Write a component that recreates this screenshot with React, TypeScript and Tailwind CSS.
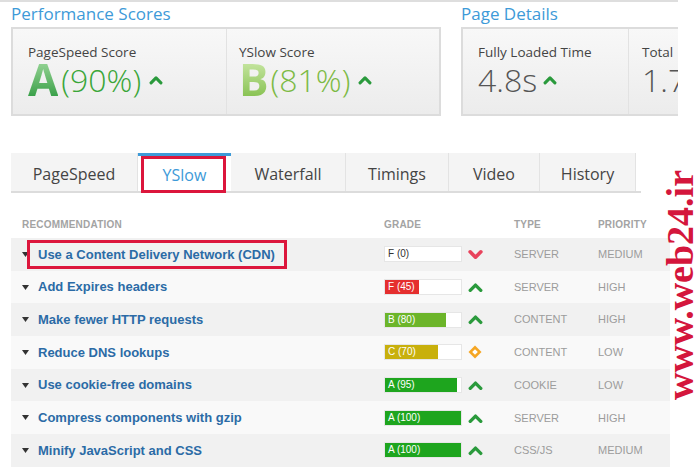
import React from "react";

type Row = {
  name: string;
  grade: string;
  pct: number;
  color: string;
  icon: "up" | "down" | "diamond";
  type: string;
  pri: string;
  hl?: boolean;
};

const rows: Row[] = [
  { name: "Use a Content Delivery Network (CDN)", grade: "F (0)", pct: 0, color: "#ffffff", icon: "down", type: "SERVER", pri: "MEDIUM", hl: true },
  { name: "Add Expires headers", grade: "F (45)", pct: 45, color: "#e52f2f", icon: "up", type: "SERVER", pri: "HIGH" },
  { name: "Make fewer HTTP requests", grade: "B (80)", pct: 80, color: "#6cb52a", icon: "up", type: "CONTENT", pri: "HIGH" },
  { name: "Reduce DNS lookups", grade: "C (70)", pct: 70, color: "#c8b00c", icon: "diamond", type: "CONTENT", pri: "LOW" },
  { name: "Use cookie-free domains", grade: "A (95)", pct: 95, color: "#1ea51e", icon: "up", type: "COOKIE", pri: "LOW" },
  { name: "Compress components with gzip", grade: "A (100)", pct: 100, color: "#1ea51e", icon: "up", type: "SERVER", pri: "HIGH" },
  { name: "Minify JavaScript and CSS", grade: "A (100)", pct: 100, color: "#1ea51e", icon: "up", type: "CSS/JS", pri: "MEDIUM" },
];

function Caret({ color = "#2a9a3c", size = 14 }: { color?: string; size?: number }) {
  return (
    <svg width={size} height={size * 0.7} viewBox="0 0 14 10">
      <path d="M2 8 L7 3 L12 8" fill="none" stroke={color} strokeWidth="3.2" strokeLinecap="round" strokeLinejoin="round" />
    </svg>
  );
}

function CaretDown() {
  return (
    <svg width="15" height="11" viewBox="0 0 14 10">
      <path d="M2 2.5 L7 7.5 L12 2.5" fill="none" stroke="#e8435c" strokeWidth="3.4" strokeLinecap="round" strokeLinejoin="round" />
    </svg>
  );
}

function Diamond() {
  return (
    <svg width="14" height="14" viewBox="0 0 14 14">
      <path d="M7 0.5 L13.5 7 L7 13.5 L0.5 7 Z" fill="#f5a623" />
      <rect x="5" y="5" width="4" height="4" transform="rotate(45 7 7)" fill="#ffffff" />
    </svg>
  );
}

const tabs = ["PageSpeed", "YSlow", "Waterfall", "Timings", "Video", "History"];
const tabWidths = ["w-[127px]", "w-[93px]", "w-[115px]", "w-[103px]", "w-[91px]", "w-[96px]"];

export default function App() {
  return (
    <div className="relative w-[700px] h-[470px] bg-white overflow-hidden" style={{ fontFamily: "'Open Sans', sans-serif" }}>
      {/* top summary */}
      <div className="w-[678px] overflow-hidden border-t-2 border-[#dedede]">
        <div className="flex pl-[11px] gap-[20px]">
          <div className="w-[430px] shrink-0">
            <div className="h-[25px] text-[17px] leading-[23px] text-[#3d9ad8]">Performance Scores</div>
            <div className="h-[89px] border-2 border-[#dcdcdc] bg-gradient-to-b from-[#f8f8f8] to-[#ececec] flex">
              <div className="w-[214px] border-r border-[#e2e2e2] pl-[15px] pt-[14px]">
                <div className="text-[13.5px] leading-[18px] text-[#444]">PageSpeed Score</div>
                <div className="flex items-end h-[36px] mt-[2px]">
                  <span className="text-[44px] leading-[40px] font-bold bg-gradient-to-b from-[#9bd89b] to-[#2f9c43] bg-clip-text text-transparent">A</span>
                  <span className="ml-[3px] text-[32px] leading-[38px] font-light text-[#3aa638]">(90%)</span>
                  <span className="ml-[8px] mb-[14px]"><Caret /></span>
                </div>
              </div>
              <div className="flex-1 pl-[12px] pt-[14px]">
                <div className="text-[13.5px] leading-[18px] text-[#444]">YSlow Score</div>
                <div className="flex items-end h-[36px] mt-[2px]">
                  <span className="text-[44px] leading-[40px] font-bold bg-gradient-to-b from-[#cbe8a6] to-[#84c04c] bg-clip-text text-transparent">B</span>
                  <span className="ml-[2px] text-[32px] leading-[38px] font-light text-[#7cba44]">(81%)</span>
                  <span className="ml-[8px] mb-[14px]"><Caret /></span>
                </div>
              </div>
            </div>
          </div>
          <div className="w-[300px] shrink-0">
            <div className="h-[25px] text-[17px] leading-[23px] text-[#3d9ad8]">Page Details</div>
            <div className="h-[89px] w-[260px] border-2 border-[#dcdcdc] bg-gradient-to-b from-[#f8f8f8] to-[#ececec] flex">
              <div className="w-[166px] border-r border-[#e2e2e2] pl-[15px] pt-[14px]">
                <div className="text-[13.5px] leading-[18px] text-[#444]">Fully Loaded Time</div>
                <div className="flex items-end h-[36px] mt-[2px]">
                  <span className="text-[32px] leading-[38px] font-light text-[#555]">4.8s</span>
                  <span className="ml-[6px] mb-[14px]"><Caret /></span>
                </div>
              </div>
              <div className="flex-1 pl-[13px] pt-[14px]">
                <div className="text-[13.5px] leading-[18px] text-[#444]">Total</div>
                <div className="flex items-end h-[36px] mt-[2px]">
                  <span className="text-[32px] leading-[38px] font-light text-[#555]">1.7</span>
                </div>
              </div>
            </div>
          </div>
        </div>
      </div>

      {/* tabs */}
      <div className="mt-[37px] ml-[11px] w-[630px] flex border-b-2 border-[#dcdcdc] h-[40px]">
        {tabs.map((t, i) => {
          const active = t === "YSlow";
          return (
            <div
              key={t}
              className={`${tabWidths[i]} relative flex items-center justify-center text-[16px] pt-[3px] ${
                active ? "bg-white text-[#3d9ad8] border-t-[3px] border-[#3d9ad8]" : "bg-[#f4f4f4] text-[#444] border-r border-[#e3e3e3]"
              }`}
            >
              {t}
              {active && <div className="absolute left-[3px] right-[5px] top-0 bottom-[-2px] border-[3px] border-[#dc163c]" />}
            </div>
          );
        })}
      </div>

      {/* table */}
      <div className="ml-[11px] w-[659px] mt-[23px]" style={{ fontFamily: "'Liberation Sans', Arial, sans-serif" }}>
        <div className="flex items-start h-[22px] pt-[3px] leading-[12px] text-[10px] font-bold text-[#a3a3a3] tracking-[0.2px]">
          <div className="w-[373px] pl-[11px]">RECOMMENDATION</div>
          <div className="w-[130px]">GRADE</div>
          <div className="w-[84px]">TYPE</div>
          <div>PRIORITY</div>
        </div>
        {rows.map((r, i) => (
          <div key={r.name} className={`flex items-center h-[32.7px] ${i % 2 === 0 ? "bg-[#f1f1f1]" : "bg-[#f9f9f9]"}`}>
            <div className="w-[373px] h-full pl-[11px] flex items-center relative">
              <svg width="7" height="5" viewBox="0 0 7 5" className="mr-[9px]">
                <path d="M0 0 L7 0 L3.5 5 Z" fill="#333" />
              </svg>
              <span className="text-[13px] font-bold text-[#2b6ba6]">{r.name}</span>
              {r.hl && <div className="absolute left-[16px] w-[260px] top-[2px] h-[29px] border-[3px] border-[#dc163c]" />}
            </div>
            <div className="w-[130px] flex items-center">
              <div className="w-[78px] h-[16px] bg-white border border-[#e6e6e6] relative">
                <div className="absolute left-0 top-0 bottom-0" style={{ width: `${r.pct}%`, backgroundColor: r.color }} />
                <span className={`absolute left-[3px] top-0 text-[10px] leading-[14px] ${r.pct === 0 ? "text-[#333]" : "text-white"}`}>{r.grade}</span>
              </div>
              <div className="ml-[5px] w-[16px] flex items-center justify-center">
                {r.icon === "up" ? <Caret size={15} /> : r.icon === "down" ? <CaretDown /> : <Diamond />}
              </div>
            </div>
            <div className="w-[84px] text-[11px] text-[#9c9c9c]">{r.type}</div>
            <div className="text-[11px] text-[#9c9c9c]">{r.pri}</div>
          </div>
        ))}
      </div>

      {/* watermark */}
      <div
        className="absolute left-[680px] top-[285px] -translate-x-1/2 -translate-y-1/2 -rotate-90 whitespace-nowrap text-[38px] leading-[38px] font-bold text-[#d4163c]"
        style={{ fontFamily: "'Liberation Serif', 'Times New Roman', serif" }}
      >
        www.web24.ir
      </div>
    </div>
  );
}
